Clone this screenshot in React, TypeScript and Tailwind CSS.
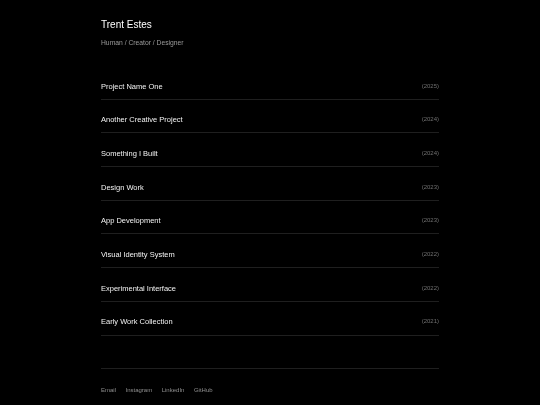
import React from 'react';

const projects = [
  { name: 'Project Name One', year: '2025' },
  { name: 'Another Creative Project', year: '2024' },
  { name: 'Something I Built', year: '2024' },
  { name: 'Design Work', year: '2023' },
  { name: 'App Development', year: '2023' },
  { name: 'Visual Identity System', year: '2022' },
  { name: 'Experimental Interface', year: '2022' },
  { name: 'Early Work Collection', year: '2021' },
];

const links = ['Email', 'Instagram', 'LinkedIn', 'GitHub'];

export default function App() {
  return (
    <div
      className="min-h-[405px] w-full bg-black antialiased"
      style={{ fontFamily: '"Liberation Sans", Arial, sans-serif' }}
    >
      <div className="mx-auto w-[338px] pt-[19px] will-change-transform">
        <header>
          <h1 className="text-[10px] leading-[12px] text-white">Trent Estes</h1>
          <p className="mt-[7px] text-[6.75px] leading-[9px] text-[#9a9a9a]">
            Human / Creator / Designer
          </p>
        </header>

        <ul className="mt-[19px]">
          {projects.map((p) => (
            <li
              key={p.name}
              className="flex items-center justify-between border-b border-[#1f1f1f] pt-[15.5px] pb-[8.2px]"
            >
              <span className="text-[7.5px] leading-[9px] text-[#f2f2f2]">{p.name}</span>
              <span className="text-[6px] leading-[9px] text-[#707070]">({p.year})</span>
            </li>
          ))}
        </ul>

        <footer className="mt-[32px] border-t border-[#1f1f1f] pt-[17px]">
          <nav className="flex gap-[9.5px]">
            {links.map((l) => (
              <a key={l} href="#" className="text-[6px] leading-[8px] text-[#8f8f8f]">
                {l}
              </a>
            ))}
          </nav>
        </footer>
      </div>
    </div>
  );
}
